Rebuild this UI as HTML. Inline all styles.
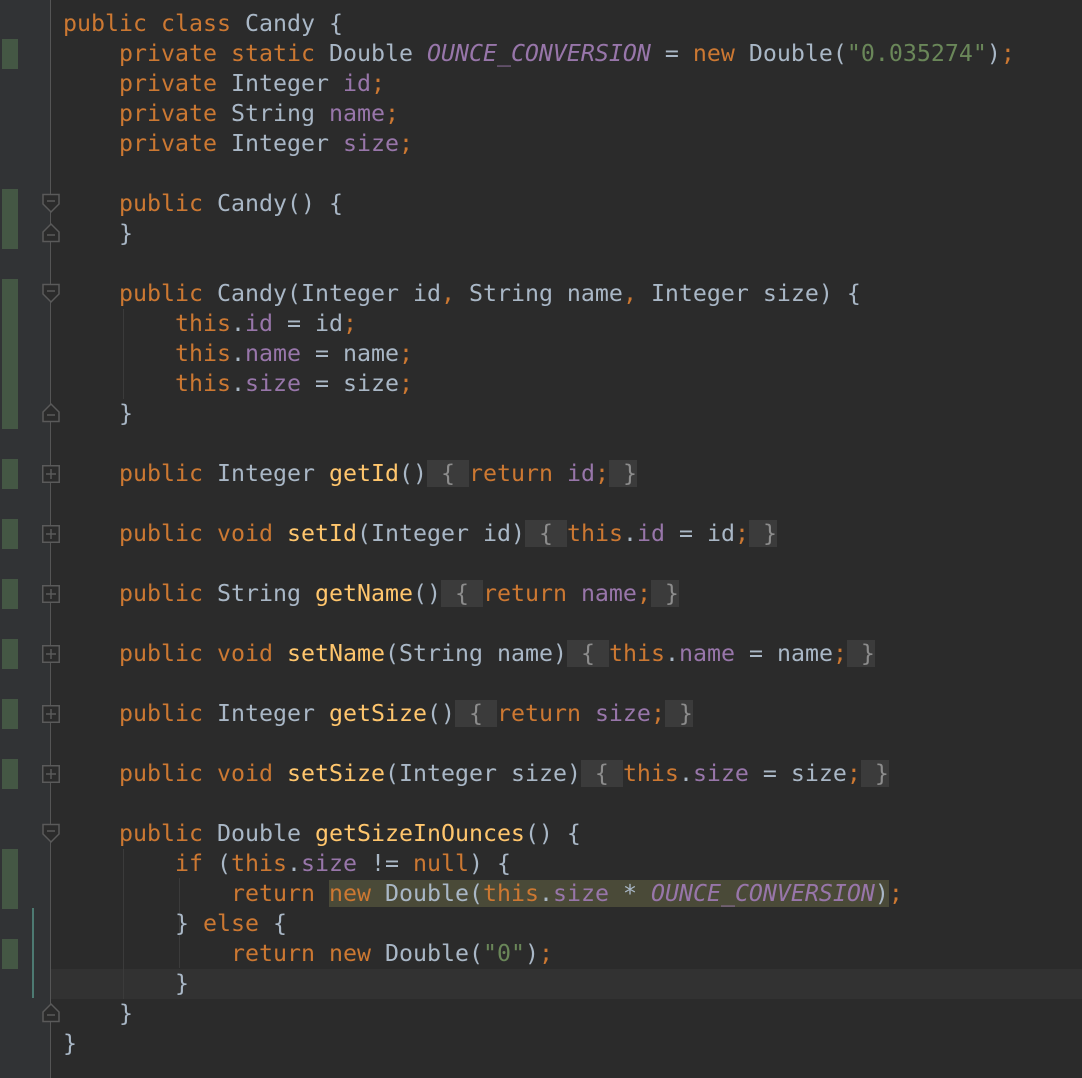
<!DOCTYPE html>
<html><head><meta charset="utf-8"><style>
body{margin:0;width:1082px;height:1078px;background:#2b2b2b;overflow:hidden;position:relative;font-family:"DejaVu Sans Mono","Liberation Mono",monospace;}
.gut{position:absolute;left:0;top:0;width:50px;height:1078px;background:#313335;}
.gl{position:absolute;left:50px;top:0;width:1px;height:1078px;background:#555555;}
.g{position:absolute;left:2px;width:16px;background:#445744;}
.cur{position:absolute;left:51px;top:969px;width:1031px;height:30px;background:#323232;}
.ln{position:absolute;left:63px;height:30px;line-height:30px;font-size:23.25px;white-space:pre;color:#a9b7c6;}
.k{color:#cc7832}.f{color:#9876aa}.fi{color:#9876aa;font-style:italic}.m{color:#ffc66d}.s{color:#6a8759}
.fb{background:#3b3b3b;color:#8c8c8c}
.hl{background:#4a4a38}
.ig{position:absolute;width:1px;background:#3b3b3b;}
svg.ic{position:absolute;left:41px;}
</style></head><body>
<div class="gut"></div>
<div class="gl"></div>
<div class="cur"></div>
<div class="g" style="top:39px;height:30px"></div>
<div class="g" style="top:189px;height:60px"></div>
<div class="g" style="top:279px;height:150px"></div>
<div class="g" style="top:459px;height:30px"></div>
<div class="g" style="top:519px;height:30px"></div>
<div class="g" style="top:579px;height:30px"></div>
<div class="g" style="top:639px;height:30px"></div>
<div class="g" style="top:699px;height:30px"></div>
<div class="g" style="top:759px;height:30px"></div>
<div class="g" style="top:849px;height:60px"></div>
<div class="g" style="top:939px;height:30px"></div>
<div style="position:absolute;left:32px;top:908px;width:2px;height:90px;background:#4d7a72"></div>
<div class="ig" style="left:123px;top:309px;height:90px"></div>
<div class="ig" style="left:123px;top:849px;height:150px"></div>
<div class="ig" style="left:179px;top:878px;height:90px"></div>

<!-- fold icons -->
<svg class="ic" style="top:193px" width="20" height="24"><path d="M2 1.5H18V11L10 19L2 11Z" fill="#2b2b2b" stroke="#5a5a5a" stroke-width="1.5"/><path d="M6 8H14" stroke="#5a5a5a" stroke-width="1.5"/></svg>
<svg class="ic" style="top:219px" width="20" height="24"><path d="M2 22.5H18V13L10 5L2 13Z" fill="#2b2b2b" stroke="#5a5a5a" stroke-width="1.5"/><path d="M6 16H14" stroke="#5a5a5a" stroke-width="1.5"/></svg>
<svg class="ic" style="top:283px" width="20" height="24"><path d="M2 1.5H18V11L10 19L2 11Z" fill="#2b2b2b" stroke="#5a5a5a" stroke-width="1.5"/><path d="M6 8H14" stroke="#5a5a5a" stroke-width="1.5"/></svg>
<svg class="ic" style="top:399px" width="20" height="24"><path d="M2 22.5H18V13L10 5L2 13Z" fill="#2b2b2b" stroke="#5a5a5a" stroke-width="1.5"/><path d="M6 16H14" stroke="#5a5a5a" stroke-width="1.5"/></svg>
<svg class="ic" style="top:823px" width="20" height="24"><path d="M2 1.5H18V11L10 19L2 11Z" fill="#2b2b2b" stroke="#5a5a5a" stroke-width="1.5"/><path d="M6 8H14" stroke="#5a5a5a" stroke-width="1.5"/></svg>
<svg class="ic" style="top:999px" width="20" height="24"><path d="M2 22.5H18V13L10 5L2 13Z" fill="#2b2b2b" stroke="#5a5a5a" stroke-width="1.5"/><path d="M6 16H14" stroke="#5a5a5a" stroke-width="1.5"/></svg>
<svg class="ic" style="top:464px" width="20" height="20"><rect x="1.75" y="1.75" width="16.5" height="16.5" fill="#2b2b2b" stroke="#5a5a5a" stroke-width="1.5"/><path d="M5 10H15M10 5V15" stroke="#5a5a5a" stroke-width="1.5"/></svg>
<svg class="ic" style="top:524px" width="20" height="20"><rect x="1.75" y="1.75" width="16.5" height="16.5" fill="#2b2b2b" stroke="#5a5a5a" stroke-width="1.5"/><path d="M5 10H15M10 5V15" stroke="#5a5a5a" stroke-width="1.5"/></svg>
<svg class="ic" style="top:584px" width="20" height="20"><rect x="1.75" y="1.75" width="16.5" height="16.5" fill="#2b2b2b" stroke="#5a5a5a" stroke-width="1.5"/><path d="M5 10H15M10 5V15" stroke="#5a5a5a" stroke-width="1.5"/></svg>
<svg class="ic" style="top:644px" width="20" height="20"><rect x="1.75" y="1.75" width="16.5" height="16.5" fill="#2b2b2b" stroke="#5a5a5a" stroke-width="1.5"/><path d="M5 10H15M10 5V15" stroke="#5a5a5a" stroke-width="1.5"/></svg>
<svg class="ic" style="top:704px" width="20" height="20"><rect x="1.75" y="1.75" width="16.5" height="16.5" fill="#2b2b2b" stroke="#5a5a5a" stroke-width="1.5"/><path d="M5 10H15M10 5V15" stroke="#5a5a5a" stroke-width="1.5"/></svg>
<svg class="ic" style="top:764px" width="20" height="20"><rect x="1.75" y="1.75" width="16.5" height="16.5" fill="#2b2b2b" stroke="#5a5a5a" stroke-width="1.5"/><path d="M5 10H15M10 5V15" stroke="#5a5a5a" stroke-width="1.5"/></svg>

<div class="ln" style="top:9px"><span class="k">public class </span>Candy {</div>
<div class="ln" style="top:39px">    <span class="k">private static </span>Double <span class="fi">OUNCE_CONVERSION</span> = <span class="k">new </span>Double(<span class="s">"0.035274"</span>)<span class="k">;</span></div>
<div class="ln" style="top:69px">    <span class="k">private </span>Integer <span class="f">id</span><span class="k">;</span></div>
<div class="ln" style="top:99px">    <span class="k">private </span>String <span class="f">name</span><span class="k">;</span></div>
<div class="ln" style="top:129px">    <span class="k">private </span>Integer <span class="f">size</span><span class="k">;</span></div>
<div class="ln" style="top:189px">    <span class="k">public </span>Candy() {</div>
<div class="ln" style="top:219px">    }</div>
<div class="ln" style="top:279px">    <span class="k">public </span>Candy(Integer id<span class="k">, </span>String name<span class="k">, </span>Integer size) {</div>
<div class="ln" style="top:309px">        <span class="k">this</span>.<span class="f">id</span> = id<span class="k">;</span></div>
<div class="ln" style="top:339px">        <span class="k">this</span>.<span class="f">name</span> = name<span class="k">;</span></div>
<div class="ln" style="top:369px">        <span class="k">this</span>.<span class="f">size</span> = size<span class="k">;</span></div>
<div class="ln" style="top:399px">    }</div>
<div class="ln" style="top:459px">    <span class="k">public </span>Integer <span class="m">getId</span>()<span class="fb"> { </span><span class="k">return </span><span class="f">id</span><span class="k">;</span><span class="fb"> }</span></div>
<div class="ln" style="top:519px">    <span class="k">public void </span><span class="m">setId</span>(Integer id)<span class="fb"> { </span><span class="k">this</span>.<span class="f">id</span> = id<span class="k">;</span><span class="fb"> }</span></div>
<div class="ln" style="top:579px">    <span class="k">public </span>String <span class="m">getName</span>()<span class="fb"> { </span><span class="k">return </span><span class="f">name</span><span class="k">;</span><span class="fb"> }</span></div>
<div class="ln" style="top:639px">    <span class="k">public void </span><span class="m">setName</span>(String name)<span class="fb"> { </span><span class="k">this</span>.<span class="f">name</span> = name<span class="k">;</span><span class="fb"> }</span></div>
<div class="ln" style="top:699px">    <span class="k">public </span>Integer <span class="m">getSize</span>()<span class="fb"> { </span><span class="k">return </span><span class="f">size</span><span class="k">;</span><span class="fb"> }</span></div>
<div class="ln" style="top:759px">    <span class="k">public void </span><span class="m">setSize</span>(Integer size)<span class="fb"> { </span><span class="k">this</span>.<span class="f">size</span> = size<span class="k">;</span><span class="fb"> }</span></div>
<div class="ln" style="top:819px">    <span class="k">public </span>Double <span class="m">getSizeInOunces</span>() {</div>
<div class="ln" style="top:849px">        <span class="k">if </span>(<span class="k">this</span>.<span class="f">size</span> != <span class="k">null</span>) {</div>
<div class="ln" style="top:879px">            <span class="k">return </span><span class="hl"><span class="k">new </span>Double(<span class="k">this</span>.<span class="f">size</span> * <span class="fi">OUNCE_CONVERSION</span>)</span><span class="k">;</span></div>
<div class="ln" style="top:909px">        } <span class="k">else </span>{</div>
<div class="ln" style="top:939px">            <span class="k">return new </span>Double(<span class="s">"0"</span>)<span class="k">;</span></div>
<div class="ln" style="top:969px">        }</div>
<div class="ln" style="top:999px">    }</div>
<div class="ln" style="top:1029px">}</div>
</body></html>
